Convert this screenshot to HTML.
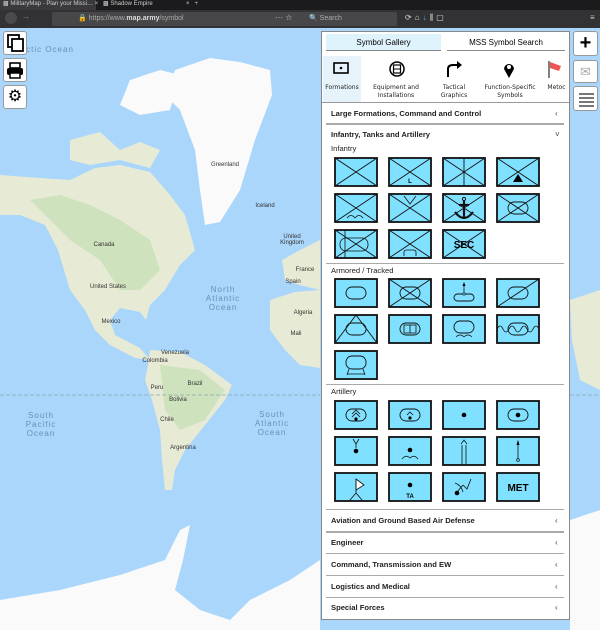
<!DOCTYPE html>
<html><head><meta charset="utf-8"><style>
*{margin:0;padding:0;box-sizing:border-box}
body{width:600px;height:630px;overflow:hidden;position:relative;font-family:"Liberation Sans","DejaVu Sans",sans-serif;background:#aad6fb}
.a{position:absolute}
.btn{position:absolute;background:#fff;border:1px solid #999;border-radius:3px}
.hdr{position:absolute;left:331px;font-size:7.6px;font-weight:bold;color:#222;font-family:"Liberation Sans",sans-serif}
.chev{position:absolute;left:555px;font-size:8px;color:#444}
.hl{position:absolute;left:326px;width:238px;height:1px;background:#aaa}
.sub{position:absolute;left:331px;font-size:7.6px;color:#222}
.cat{position:absolute;top:84px;font-size:6px;text-align:center;color:#222;line-height:8px;font-family:"DejaVu Sans",sans-serif}
</style></head><body>
<svg class="a" style="left:0;top:28px" width="600" height="602" viewBox="0 28 600 602">
<rect x="0" y="28" width="600" height="602" fill="#aad6fb"/>
<g fill="#e7ebd5">
<path d="M0 175 L40 178 L70 180 L95 168 L120 165 L150 172 L170 195 L185 215 L195 250 L180 265 L165 290 L150 305 L146 320 L140 312 L120 308 L110 320 L115 335 L140 348 L150 360 L135 358 L110 345 L95 330 L85 310 L70 290 L58 250 L45 225 L20 215 L0 215Z"/>
<path d="M70 140 L100 132 L120 150 L140 142 L160 150 L150 168 L120 160 L90 165 L70 160Z"/>
<path d="M150 350 L180 352 L205 365 L232 385 L225 400 L205 425 L185 450 L175 470 L172 490 L165 490 L162 460 L160 430 L152 400 L145 380 L148 365Z"/>
<path d="M270 300 L295 292 L320 290 L320 368 L300 365 L285 350 L270 330Z"/>
<path d="M282 260 L300 250 L320 240 L320 290 L300 285 L285 280Z"/>
<path d="M570 300 L600 290 L600 390 L580 380 L572 340Z"/>
</g>
<g fill="#c8e0b8" opacity="0.8">
<path d="M30 200 L60 195 L90 205 L120 220 L150 240 L160 270 L140 290 L120 290 L100 260 L70 240 L50 220Z"/>
<path d="M160 365 L200 370 L225 390 L205 420 L180 430 L165 410Z"/>
</g>
<g fill="#fafafa">
<path d="M175 70 L210 58 L240 62 L270 70 L272 95 L255 140 L240 190 L220 222 L205 225 L200 190 L195 150 L180 110 L165 95Z"/>
<path d="M130 80 L160 70 L180 75 L170 110 L140 115 L120 105Z"/>
<path d="M0 600 L60 590 L120 575 L165 560 L180 530 L190 525 L183 560 L175 590 L200 610 L230 620 L250 600 L290 580 L320 560 L320 630 L0 630Z"/>
<path d="M570 520 L600 510 L600 630 L570 630Z"/>
</g>
<line x1="0" y1="395" x2="320" y2="395" stroke="#8aa" stroke-dasharray="4 2" stroke-width="0.7"/>
<line x1="570" y1="395" x2="600" y2="395" stroke="#8aa" stroke-dasharray="4 2" stroke-width="0.7"/>
<g font-family="Liberation Sans" fill="#6b8fb5" font-size="8" text-anchor="middle" letter-spacing="1">
<text x="50" y="52">ctic Ocean</text>
<text x="223" y="292">North</text><text x="223" y="301">Atlantic</text><text x="223" y="310">Ocean</text>
<text x="41" y="418">South</text><text x="41" y="427">Pacific</text><text x="41" y="436">Ocean</text>
<text x="272" y="417">South</text><text x="272" y="426">Atlantic</text><text x="272" y="435">Ocean</text>
</g>
<g font-family="Liberation Sans" fill="#333" font-size="6" text-anchor="middle">
<text x="225" y="166">Greenland</text><text x="265" y="207">Iceland</text>
<text x="104" y="246">Canada</text><text x="108" y="288">United States</text>
<text x="111" y="323">Mexico</text><text x="175" y="354">Venezuela</text><text x="155" y="362">Colombia</text>
<text x="195" y="385">Brazil</text><text x="157" y="389">Peru</text><text x="178" y="401">Bolivia</text>
<text x="167" y="421">Chile</text><text x="183" y="449">Argentina</text>
<text x="292" y="238">United</text><text x="292" y="244">Kingdom</text><text x="305" y="271">France</text><text x="293" y="283">Spain</text>
<text x="303" y="314">Algeria</text><text x="296" y="335">Mali</text>
</g>
</svg>
<div class="a" style="left:0;top:0;width:600px;height:10px;background:#1b1b1d"></div>
<div class="a" style="left:0;top:0;width:96px;height:10px;background:#3a3a3d"></div>
<div class="a" style="left:3px;top:0;font-size:6px;color:#ccc;white-space:nowrap">&#9641; MilitaryMap - Plan your Missi… ×</div>
<div class="a" style="left:103px;top:0;font-size:6px;color:#ccc;white-space:nowrap">&#9641; Shadow Empire&nbsp;&nbsp;&nbsp;&nbsp;&nbsp;&nbsp;&nbsp;&nbsp;&nbsp;&nbsp;&nbsp;&nbsp;&nbsp;&nbsp;&nbsp;&nbsp;&nbsp;&nbsp;&nbsp;&nbsp;×&nbsp;&nbsp;&nbsp;+</div>
<div class="a" style="left:0;top:10px;width:600px;height:18px;background:#323234"></div>
<div class="a" style="left:5px;top:12px;width:12px;height:12px;border-radius:6px;background:#4a4a4e"></div>
<div class="a" style="left:22px;top:12px;font-size:8px;color:#888">→</div>
<div class="a" style="left:52px;top:12px;width:290px;height:14px;background:#474749;border-radius:2px"></div>
<div class="a" style="left:78px;top:14px;font-size:7px;color:#aaa">🔒 https://www.<b style="color:#ddd">map.army</b>/symbol</div>
<div class="a" style="left:275px;top:13px;font-size:8px;color:#ccc">··· ☆</div>
<div class="a" style="left:302px;top:12px;width:95px;height:14px;background:#474749;border-radius:2px"></div>
<div class="a" style="left:309px;top:14px;font-size:7px;color:#aaa">🔍 Search</div>
<div class="a" style="left:405px;top:13px;font-size:8px;color:#ddd;letter-spacing:3px">⟳⌂<span style="color:#4af">↓</span>⫼▢</div>
<div class="a" style="left:590px;top:13px;font-size:8px;color:#ccc">≡</div>
<div class="btn" style="left:3px;top:31px;width:24px;height:24px"><svg width="22" height="22"><rect x="4" y="3" width="11" height="12" fill="#fff" stroke="#000" stroke-width="1.8"/><rect x="8" y="7" width="11" height="12" fill="#fff" stroke="#000" stroke-width="1.8"/></svg></div>
<div class="btn" style="left:3px;top:58px;width:24px;height:24px"><svg width="22" height="22"><rect x="6" y="4" width="10" height="5" fill="none" stroke="#000" stroke-width="1.6"/><rect x="3" y="9" width="16" height="7" rx="2" fill="#000"/><rect x="6" y="14" width="10" height="5" fill="#fff" stroke="#000" stroke-width="1.5"/></svg></div>
<div class="btn" style="left:3px;top:85px;width:24px;height:24px;text-align:center;font-size:16px;line-height:22px">⚙</div>
<div class="btn" style="left:573px;top:31px;width:25px;height:25px;text-align:center;font-size:20px;font-weight:bold;line-height:22px">+</div>
<div class="btn" style="left:573px;top:60px;width:25px;height:23px;text-align:center;font-size:13px;color:#aaa;line-height:22px">✉</div>
<div class="btn" style="left:573px;top:86px;width:25px;height:25px"><svg width="24" height="24"><g stroke="#777" stroke-width="2"><line x1="5" y1="7" x2="20" y2="7"/><line x1="5" y1="11" x2="20" y2="11"/><line x1="5" y1="15" x2="20" y2="15"/><line x1="5" y1="19" x2="20" y2="19"/></g></svg></div>
<div class="a" style="left:321px;top:31px;width:249px;height:589px;background:#fff;border:1px solid #888"></div>
<div class="a" style="left:326px;top:34px;width:115px;height:17px;background:#dff3fc;border-bottom:1px solid #888;font-size:8px;text-align:center;line-height:17px">Symbol Gallery</div>
<div class="a" style="left:447px;top:34px;width:118px;height:17px;border-bottom:1px solid #888;font-size:8px;text-align:center;line-height:17px">MSS Symbol Search</div>
<div class="a" style="left:323px;top:56px;width:38px;height:46px;background:#e6f3fb"></div>
<div class="a" style="left:322px;top:102px;width:247px;height:1px;background:#999"></div>
<svg class="a" style="left:321px;top:56px" width="249" height="28">
<rect x="13" y="7" width="14" height="10" fill="none" stroke="#000" stroke-width="1.6"/><circle cx="20" cy="12" r="1.3"/>
<circle cx="76" cy="13" r="7" fill="none" stroke="#000" stroke-width="1.5"/><rect x="72.5" y="9" width="7" height="8" fill="none" stroke="#000" stroke-width="1.2"/><line x1="72" y1="13" x2="80" y2="13" stroke="#000"/>
<path d="M127 21 L127 13 Q127 9 132 9 L137 9" fill="none" stroke="#000" stroke-width="2"/><path d="M136 5 L141 9 L136 13Z"/>
<path d="M188 22 L183 13 A5 5 0 1 1 193 13Z"/><circle cx="188" cy="11" r="2" fill="#fff"/>
<line x1="228" y1="5" x2="228" y2="22" stroke="#000"/><path d="M229 6 L240 10 L238 15 L229 12Z" fill="#e55"/>
</svg>
<div class="cat" style="left:323px;width:38px">Formations</div>
<div class="cat" style="left:366px;width:60px">Equipment and<br>Installations</div>
<div class="cat" style="left:434px;width:40px">Tactical<br>Graphics</div>
<div class="cat" style="left:480px;width:60px">Function-Specific<br>Symbols</div>
<div class="cat" style="left:543px;width:27px">Metoc</div>
<div class="hdr" style="top:109px">Large Formations, Command and Control</div><div class="chev" style="top:109px">‹</div>
<div class="hl" style="top:123px;height:1.5px"></div>
<div class="hdr" style="top:130px">Infantry, Tanks and Artillery</div><div class="chev" style="top:130px">˅</div>
<div class="sub" style="top:144px">Infantry</div>
<div class="hl" style="top:263px"></div>
<div class="sub" style="top:266px">Armored / Tracked</div>
<div class="hl" style="top:384px"></div>
<div class="sub" style="top:387px">Artillery</div>
<div class="hl" style="top:509px"></div>
<div class="hdr" style="top:516px">Aviation and Ground Based Air Defense</div><div class="chev" style="top:516px">‹</div>
<div class="hl" style="top:531px;height:1.5px"></div>
<div class="hdr" style="top:538px">Engineer</div><div class="chev" style="top:538px">‹</div>
<div class="hl" style="top:553px"></div>
<div class="hdr" style="top:560px">Command, Transmission and EW</div><div class="chev" style="top:560px">‹</div>
<div class="hl" style="top:575px"></div>
<div class="hdr" style="top:582px">Logistics and Medical</div><div class="chev" style="top:582px">‹</div>
<div class="hl" style="top:597px"></div>
<div class="hdr" style="top:603px">Special Forces</div><div class="chev" style="top:603px">‹</div>
<svg class="a" style="left:0;top:0" width="600" height="630">
<defs>
<rect id="b" x="0" y="0" width="42" height="28" fill="#80e0ff" stroke="#111" stroke-width="1.8"/>
<path id="x" d="M0 0 L42 28 M42 0 L0 28" stroke="#111" stroke-width="0.9" fill="none"/>
<rect id="o" x="11" y="8" width="20" height="12" rx="6" fill="none" stroke="#111" stroke-width="0.9"/>
</defs>
<g font-family="Liberation Sans" font-weight="bold" text-anchor="middle">
<g transform="translate(335,158)"><use href="#b"/><use href="#x"/></g>
<g transform="translate(389,158)"><use href="#b"/><use href="#x"/><text x="21" y="25" font-size="6">L</text></g>
<g transform="translate(443,158)"><use href="#b"/><use href="#x"/><line x1="21" y1="0" x2="21" y2="28" stroke="#111" stroke-width="0.9"/></g>
<g transform="translate(497,158)"><use href="#b"/><use href="#x"/><path d="M21 16 L26 24 L16 24Z"/></g>
<g transform="translate(335,194)"><use href="#b"/><use href="#x"/><path d="M12 24 Q16 19 20 24 Q24 19 28 24" fill="none" stroke="#111" stroke-width="0.7"/></g>
<g transform="translate(389,194)"><use href="#b"/><use href="#x"/><path d="M15 2 L21 10 L27 2" fill="none" stroke="#111" stroke-width="0.8"/></g>
<g transform="translate(443,194)"><use href="#b"/><use href="#x"/><path d="M21 7 L21 25 M16 11 L26 11 M12 18 Q21 30 30 18" fill="none" stroke="#111" stroke-width="2.2"/><circle cx="21" cy="5" r="1.6" fill="none" stroke="#111"/></g>
<g transform="translate(497,194)"><use href="#b"/><use href="#x"/><use href="#o"/></g>
<g transform="translate(335,230)"><use href="#b"/><use href="#x"/><rect x="5" y="8" width="28" height="13" rx="6" fill="none" stroke="#111" stroke-width="0.8"/><line x1="10" y1="0" x2="10" y2="28" stroke="#111" stroke-width="0.8"/></g>
<g transform="translate(389,230)"><use href="#b"/><use href="#x"/><path d="M15 26 L15 22 Q15 20 18 20 L24 20 Q27 20 27 22 L27 26" fill="none" stroke="#111" stroke-width="0.8"/></g>
<g transform="translate(443,230)"><use href="#b"/><use href="#x"/><text x="21" y="18" font-size="10">SEC</text></g>
<g transform="translate(335,279)"><use href="#b"/><use href="#o"/></g>
<g transform="translate(389,279)"><use href="#b"/><use href="#x"/><use href="#o"/></g>
<g transform="translate(443,279)"><use href="#b"/><rect x="11" y="15" width="20" height="7" rx="3.5" fill="none" stroke="#111" stroke-width="0.9"/><line x1="21" y1="15" x2="21" y2="4" stroke="#111" stroke-width="0.8"/><path d="M21 3 L19.5 7 L22.5 7Z"/><circle cx="21" cy="15" r="1.2" fill="#80e0ff" stroke="#111" stroke-width="0.6"/></g>
<g transform="translate(497,279)"><use href="#b"/><use href="#o"/><line x1="0" y1="28" x2="42" y2="0" stroke="#111" stroke-width="0.9"/></g>
<g transform="translate(335,315)"><use href="#b"/><use href="#o"/><path d="M0 28 L21 0 L42 28" fill="none" stroke="#111" stroke-width="0.9"/></g>
<g transform="translate(389,315)"><use href="#b"/><use href="#o"/><rect x="15" y="10" width="12" height="8" fill="none" stroke="#111" stroke-width="0.8"/><line x1="21" y1="10" x2="21" y2="18" stroke="#111" stroke-width="0.8"/></g>
<g transform="translate(443,315)"><use href="#b"/><rect x="11" y="6" width="20" height="12" rx="6" fill="none" stroke="#111" stroke-width="0.9"/><path d="M13 22 Q17 18 21 22 Q25 18 29 22" fill="none" stroke="#111" stroke-width="0.7"/></g>
<g transform="translate(497,315)"><use href="#b"/><use href="#o"/><path d="M0 14 Q3 8 6 14 Q9 20 12 14 Q15 8 18 14 Q21 20 24 14 Q27 8 30 14 Q33 20 36 14 Q39 8 42 14" fill="none" stroke="#111" stroke-width="0.8"/></g>
<g transform="translate(335,351)"><use href="#b"/><rect x="11" y="5" width="20" height="13" rx="6" fill="none" stroke="#111" stroke-width="0.9"/><path d="M14 18 L12 24 M28 18 L30 24 M12 23 L30 23" fill="none" stroke="#111" stroke-width="0.8"/></g>
<g transform="translate(335,401)"><use href="#b"/><use href="#o"/><path d="M17 13 L21 9 L25 13 M17 16 L21 12 L25 16" fill="none" stroke="#111" stroke-width="0.8"/><circle cx="21" cy="18" r="1.6"/></g>
<g transform="translate(389,401)"><use href="#b"/><use href="#o"/><path d="M18 14 L21 11 L24 14" fill="none" stroke="#111" stroke-width="0.8"/><circle cx="21" cy="17" r="1.6"/></g>
<g transform="translate(443,401)"><use href="#b"/><circle cx="21" cy="14" r="2.3"/></g>
<g transform="translate(497,401)"><use href="#b"/><use href="#o"/><circle cx="21" cy="14" r="2.3"/></g>
<g transform="translate(335,437)"><use href="#b"/><path d="M18 2 L21 7 L24 2" fill="none" stroke="#111" stroke-width="0.8"/><line x1="21" y1="7" x2="21" y2="11" stroke="#111" stroke-width="0.8"/><circle cx="21" cy="14" r="2.3"/></g>
<g transform="translate(389,437)"><use href="#b"/><circle cx="21" cy="13" r="2.3"/><path d="M13 22 Q17 17 21 21 Q25 17 29 22" fill="none" stroke="#111" stroke-width="0.8"/></g>
<g transform="translate(443,437)"><use href="#b"/><path d="M19 27 L19 8 M23 27 L23 8 M18 7 L21 3 L24 7" fill="none" stroke="#111" stroke-width="0.8"/></g>
<g transform="translate(497,437)"><use href="#b"/><line x1="21" y1="4" x2="21" y2="22" stroke="#111" stroke-width="0.8"/><path d="M21 3 L19.5 8 L22.5 8Z"/><circle cx="21" cy="23" r="1.4" fill="#80e0ff" stroke="#111" stroke-width="0.7"/></g>
<g transform="translate(335,473)"><use href="#b"/><path d="M21 6 L29 12 L21 17Z" fill="#fff" stroke="#111" stroke-width="0.8"/><path d="M21 6 L21 20 M15 27 L21 20 L27 27" fill="none" stroke="#111" stroke-width="0.8"/></g>
<g transform="translate(389,473)"><use href="#b"/><circle cx="21" cy="12" r="2.3"/><text x="21" y="25" font-size="6">TA</text></g>
<g transform="translate(443,473)"><use href="#b"/><circle cx="14" cy="20" r="2.3"/><path d="M14 19 L20 12 M12 10 Q18 12 20 19 M20 12 L24 16 L28 6" fill="none" stroke="#111" stroke-width="0.8"/></g>
<g transform="translate(497,473)"><use href="#b"/><text x="21" y="18" font-size="10">MET</text></g>
</g>
</svg>
</body></html>
